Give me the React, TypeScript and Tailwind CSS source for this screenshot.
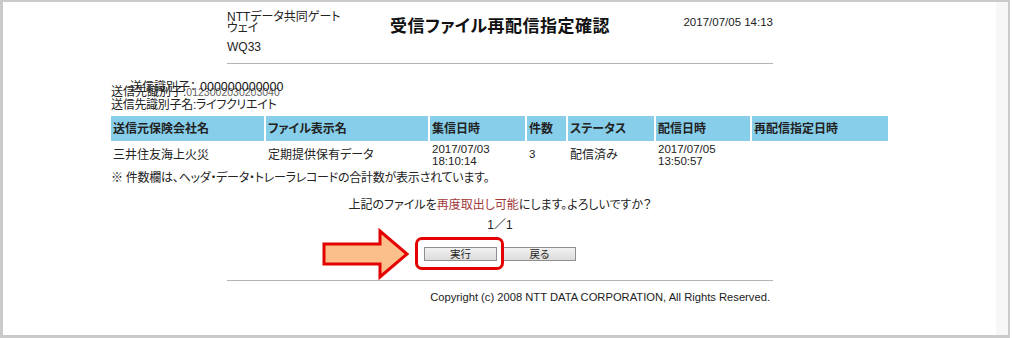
import React from "react";

const headers = ["送信元保険会社名", "ファイル表示名", "集信日時", "件数", "ステータス", "配信日時", "再配信指定日時"];

const App: React.FC = () => {
    return (
        <div className="w-[1012px] h-[338px] bg-white font-['Liberation_Sans','Noto_Sans_CJK_JP',sans-serif] text-[#222] [font-feature-settings:'palt']">
            <div className="w-[1010px] h-[338px] flex border-l-[3px] border-t-2 border-b-[3px] border-r-2 border-[#cacaca]">
                <main className="flex-1 flex flex-col">
                    {/* header */}
                    <div className="ml-[224px] w-[546px] mt-[10px] grid grid-cols-[1fr_auto_1fr] items-start">
                        <div className="text-[12px] leading-[11px]">
                            <div>NTTデータ共同ゲート<br />ウェイ</div>
                            <div className="mt-[8px]">WQ33</div>
                        </div>
                        <h1 className="mt-[5px] text-[17px] leading-[20px] font-bold tracking-[0.5px] text-[#111]">
                            受信ファイル再配信指定確認
                        </h1>
                        <div className="mt-[3px] justify-self-end text-[11.5px] leading-[14px]">2017/07/05 14:13</div>
                    </div>
                    <div className="ml-[224px] w-[546px] mt-[10px] border-t border-[#b3b3b3]" />

                    {/* identifiers */}
                    <div className="ml-[108px] mt-[22px] relative text-[12px] leading-[13px]">
                        <div className="absolute left-[19px] top-[-5px] whitespace-nowrap">
                            送信識別子：<span className="ml-[4px] text-[12.5px] text-[#111]">000000000000</span>
                        </div>
                        <div className="whitespace-nowrap">
                            送信先識別子:<span className="text-[10.5px] text-[#666]">0123002030203040</span>
                        </div>
                        <div className="whitespace-nowrap tracking-[-0.3px]">送信先識別子名:ライフクリエイト</div>
                    </div>

                    {/* table */}
                    <div className="ml-[108px] mt-[4px] grid grid-cols-[153px_162px_95px_39px_86px_94px_136px] gap-x-[2px] gap-y-[1px] text-[12px]">
                        {headers.map((h) => (
                            <div key={h} className="h-[25px] bg-[#87ceeb] pl-[2px] flex items-center font-bold leading-[14px]">
                                {h}
                            </div>
                        ))}
                        <div className="h-[26px] pl-[2px] flex items-center">三井住友海上火災</div>
                        <div className="h-[26px] pl-[2px] flex items-center">定期提供保有データ</div>
                        <div className="h-[26px] pl-[2px] flex flex-col justify-center text-[11.5px] leading-[12px]">
                            <span>2017/07/03</span>
                            <span>18:10:14</span>
                        </div>
                        <div className="h-[26px] pl-[2px] flex items-center text-[11.5px]">3</div>
                        <div className="h-[26px] pl-[2px] flex items-center">配信済み</div>
                        <div className="h-[26px] pl-[2px] flex flex-col justify-center text-[11.5px] leading-[12px]">
                            <span>2017/07/05</span>
                            <span>13:50:57</span>
                        </div>
                        <div className="h-[26px]" />
                    </div>
                    <p className="ml-[108px] mt-[3px] text-[12px] leading-[14px] tracking-[-0.25px]">
                        ※ 件数欄は、ヘッダ・データ・トレーラレコードの合計数が表示されています。
                    </p>

                    {/* confirmation */}
                    <div className="ml-[224px] w-[546px] flex flex-col items-center">
                        <p className="mt-[13px] text-[12px] leading-[14px]">
                            上記のファイルを<span className="text-[#a33a3a]">再度取出し可能</span>にします。よろしいですか？
                        </p>
                        <p className="mt-[6px] text-[12px] leading-[14px]">1／1</p>
                        <div className="relative mt-[15px] flex gap-[6px]">
                            <svg className="absolute left-[-102px] top-[-19px]" width="88" height="54" viewBox="0 0 88 54">
                                <path d="M2 16 H58 V3 L85 26 L58 49 V36 H2 Z" fill="#fbbf8c" stroke="#e40000" strokeWidth="3" strokeLinejoin="miter" />
                            </svg>
                            <div className="absolute left-[-9px] top-[-10px] w-[89px] h-[33px] rounded-[7px] border-[3px] border-[#e40000]" />
                            <button className="w-[73px] h-[14px] border border-[#8f8f8f] bg-gradient-to-b from-[#f2f2f2] to-[#dcdcdc] text-[10.5px] leading-[12px] text-[#222]">
                                実行
                            </button>
                            <button className="w-[73px] h-[14px] border border-[#8f8f8f] bg-gradient-to-b from-[#f2f2f2] to-[#dcdcdc] text-[10.5px] leading-[12px] text-[#222]">
                                戻る
                            </button>
                        </div>
                        <div className="w-full mt-[19px] border-t border-[#b3b3b3]" />
                        <p className="w-full mt-[9px] pr-[3px] text-right text-[11.2px] leading-[14px]">
                            Copyright (c) 2008 NTT DATA CORPORATION, All Rights Reserved.
                        </p>
                    </div>
                </main>
                <div className="w-[12px] bg-[#f7f7f7]" />
            </div>
        </div>
    );
};

export default App;
